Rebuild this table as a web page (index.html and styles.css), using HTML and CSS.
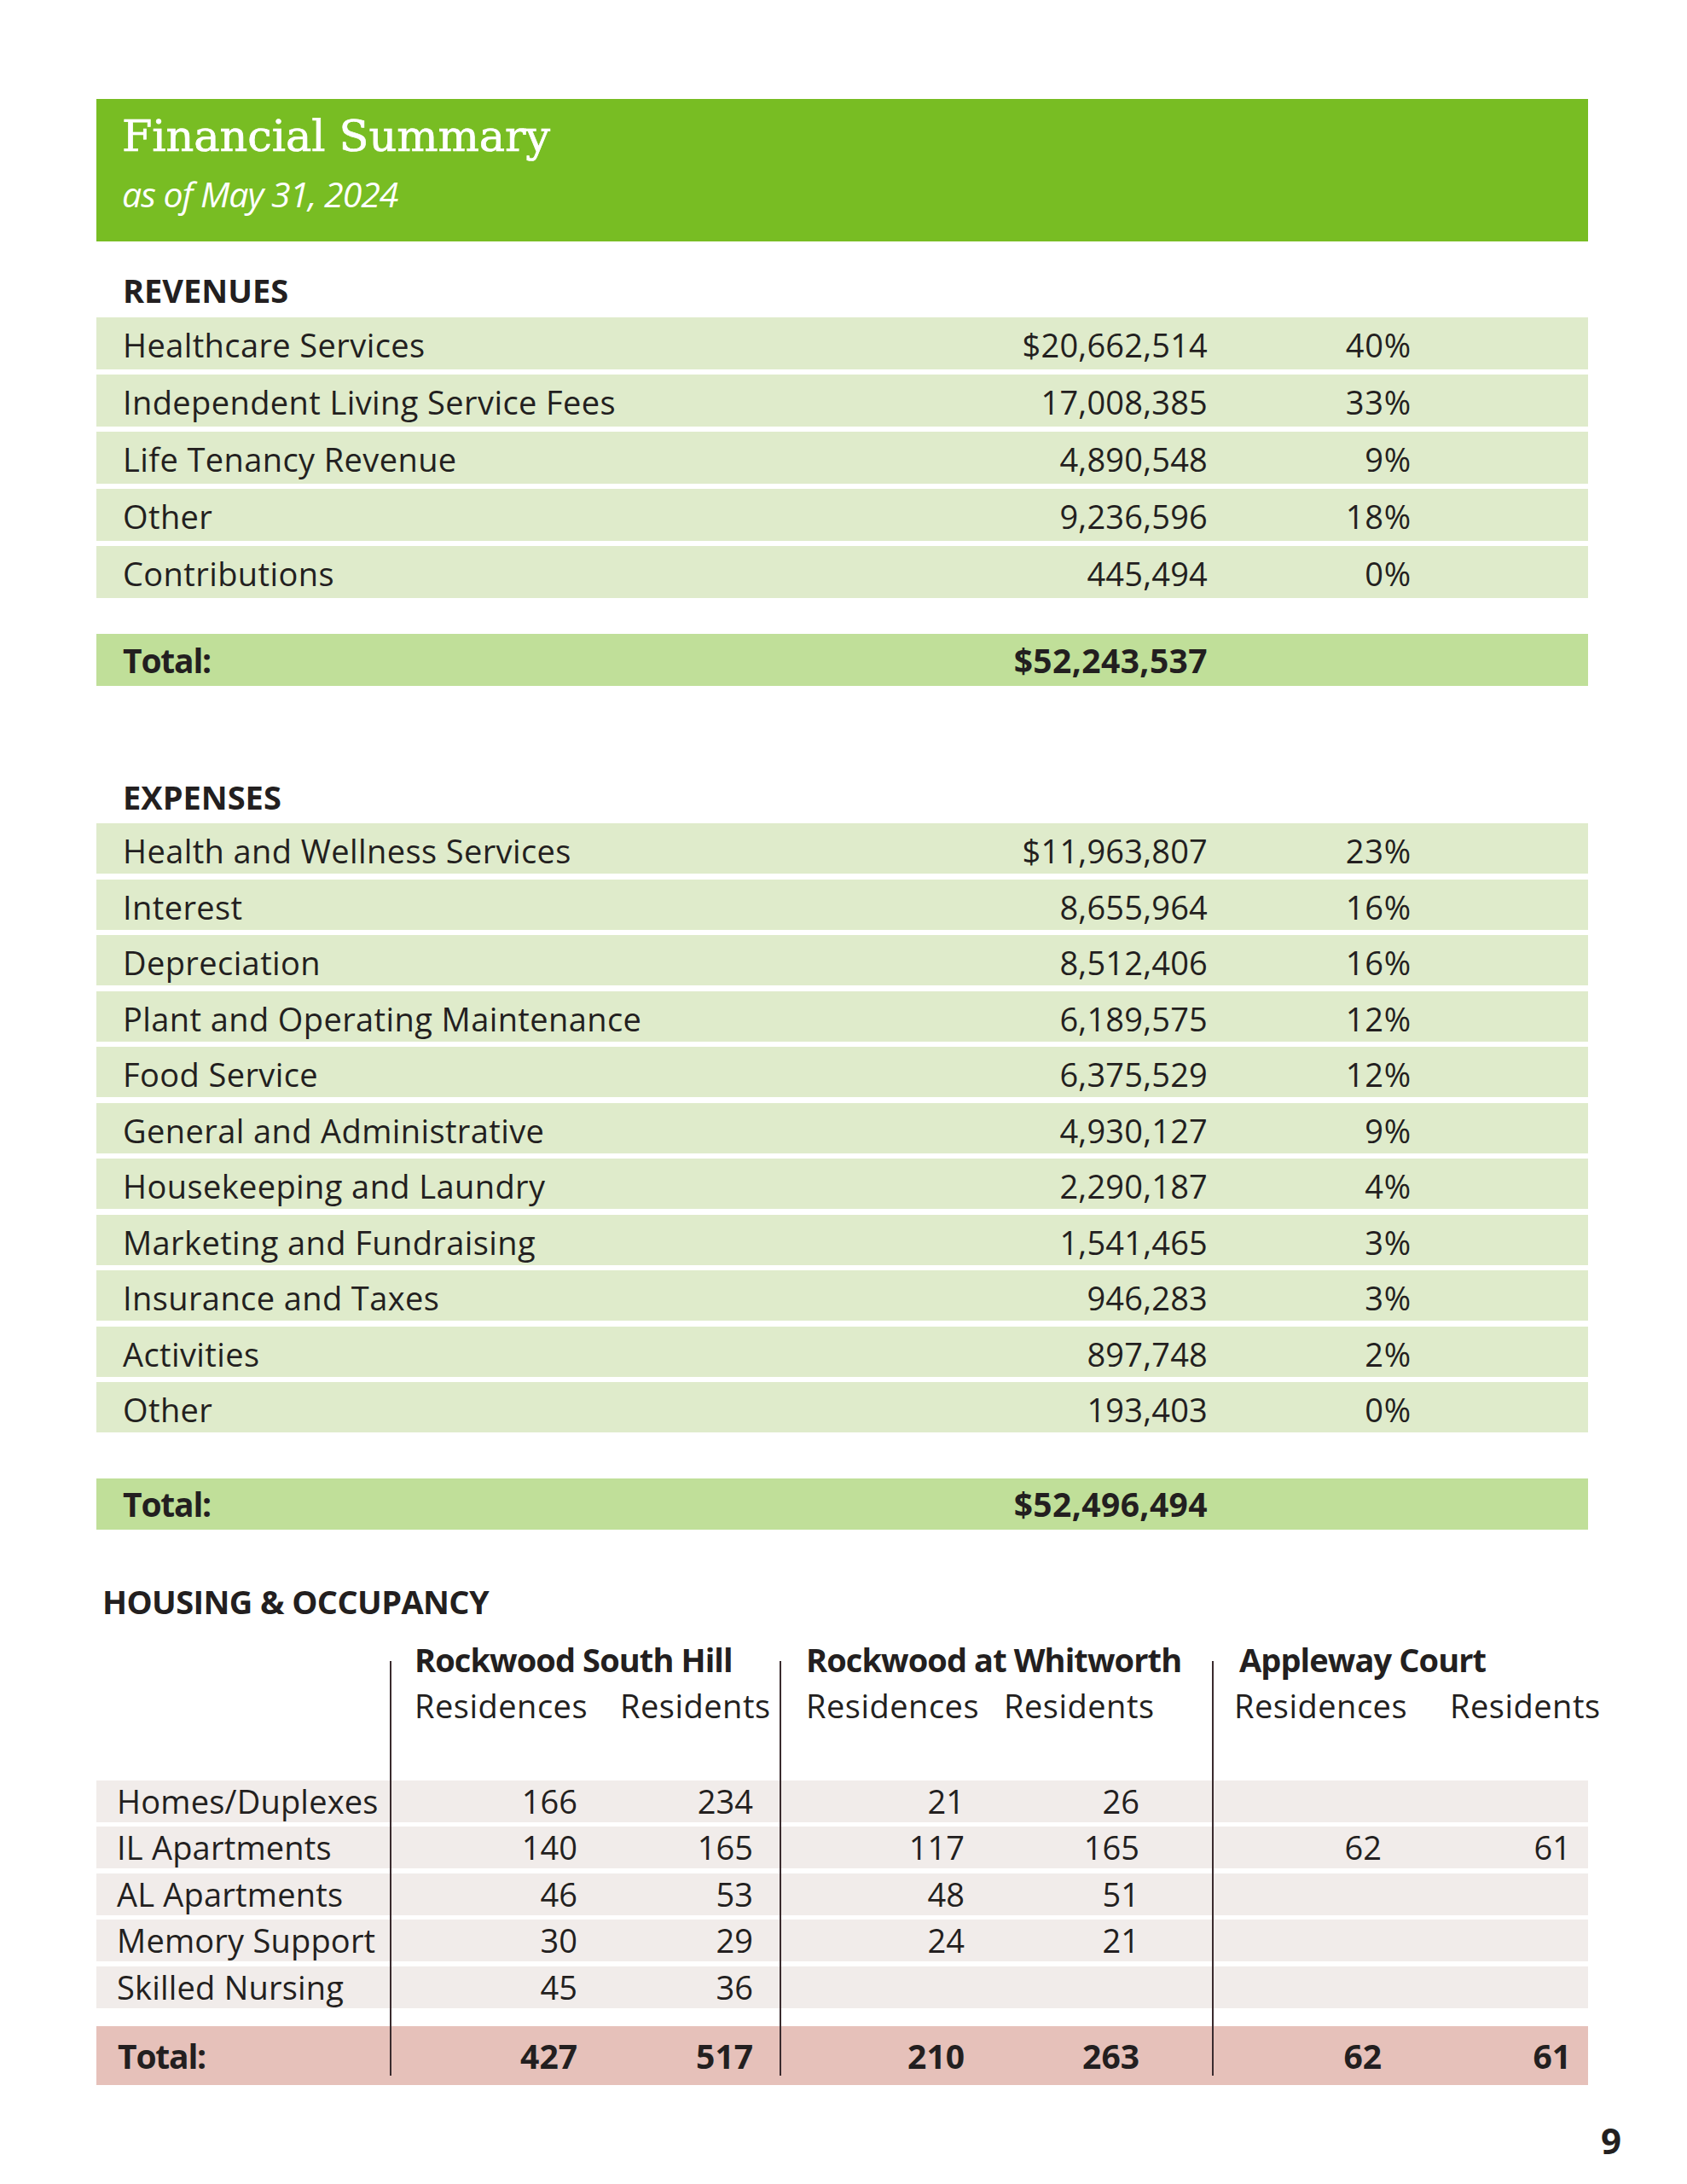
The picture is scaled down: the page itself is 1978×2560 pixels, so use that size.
FILE: index.html
```html
<!DOCTYPE html>
<html lang="en">
<head>
<meta charset="utf-8">
<title>Financial Summary</title>
<link rel="stylesheet" href="styles.css">
</head>
<body>
<main class="page">
  <header class="banner">
    <h1 class="banner-title">Financial Summary</h1>
    <p class="banner-sub">as of May 31, 2024</p>
  </header>

  <section class="fin fin-rev">
    <h2 class="sec-title">REVENUES</h2>
    <div class="rows">
      <div class="row"><span class="lbl">Healthcare Services</span><span class="amt">$20,662,514</span><span class="pct">40%</span></div>
      <div class="row"><span class="lbl">Independent Living Service Fees</span><span class="amt">17,008,385</span><span class="pct">33%</span></div>
      <div class="row"><span class="lbl">Life Tenancy Revenue</span><span class="amt">4,890,548</span><span class="pct">9%</span></div>
      <div class="row"><span class="lbl">Other</span><span class="amt">9,236,596</span><span class="pct">18%</span></div>
      <div class="row"><span class="lbl">Contributions</span><span class="amt">445,494</span><span class="pct">0%</span></div>
    </div>
    <div class="total"><span class="lbl">Total:</span><span class="amt">$52,243,537</span><span class="pct"></span></div>
  </section>

  <section class="fin fin-exp">
    <h2 class="sec-title">EXPENSES</h2>
    <div class="rows">
      <div class="row"><span class="lbl">Health and Wellness Services</span><span class="amt">$11,963,807</span><span class="pct">23%</span></div>
      <div class="row"><span class="lbl">Interest</span><span class="amt">8,655,964</span><span class="pct">16%</span></div>
      <div class="row"><span class="lbl">Depreciation</span><span class="amt">8,512,406</span><span class="pct">16%</span></div>
      <div class="row"><span class="lbl">Plant and Operating Maintenance</span><span class="amt">6,189,575</span><span class="pct">12%</span></div>
      <div class="row"><span class="lbl">Food Service</span><span class="amt">6,375,529</span><span class="pct">12%</span></div>
      <div class="row"><span class="lbl">General and Administrative</span><span class="amt">4,930,127</span><span class="pct">9%</span></div>
      <div class="row"><span class="lbl">Housekeeping and Laundry</span><span class="amt">2,290,187</span><span class="pct">4%</span></div>
      <div class="row"><span class="lbl">Marketing and Fundraising</span><span class="amt">1,541,465</span><span class="pct">3%</span></div>
      <div class="row"><span class="lbl">Insurance and Taxes</span><span class="amt">946,283</span><span class="pct">3%</span></div>
      <div class="row"><span class="lbl">Activities</span><span class="amt">897,748</span><span class="pct">2%</span></div>
      <div class="row"><span class="lbl">Other</span><span class="amt">193,403</span><span class="pct">0%</span></div>
    </div>
    <div class="total"><span class="lbl">Total:</span><span class="amt">$52,496,494</span><span class="pct"></span></div>
  </section>

  <section class="occupancy">
    <h2 class="sec-title occ-title">HOUSING &amp; OCCUPANCY</h2>
    <div class="occ">
      <!-- bands -->
      <div class="band r3"></div>
      <div class="band r4"></div>
      <div class="band r5"></div>
      <div class="band r6"></div>
      <div class="band r7"></div>
      <div class="band band-total r8"></div>

      <!-- group headings -->
      <div class="grp g1 r1">Rockwood South Hill</div>
      <div class="grp g2 r1">Rockwood at Whitworth</div>
      <div class="grp g3 r1">Appleway Court</div>

      <div class="sub c2 r2">Residences</div>
      <div class="sub c3 r2">Residents</div>
      <div class="sub c4 r2">Residences</div>
      <div class="sub c5 r2">Residents</div>
      <div class="sub c6 r2">Residences</div>
      <div class="sub c7 r2">Residents</div>

      <div class="cell name r3">Homes/Duplexes</div>
      <div class="cell val c2 r3">166</div>
      <div class="cell val c3 r3">234</div>
      <div class="cell val c4 r3">21</div>
      <div class="cell val c5 r3">26</div>

      <div class="cell name r4">IL Apartments</div>
      <div class="cell val c2 r4">140</div>
      <div class="cell val c3 r4">165</div>
      <div class="cell val c4 r4">117</div>
      <div class="cell val c5 r4">165</div>
      <div class="cell val c6 r4">62</div>
      <div class="cell val c7 r4">61</div>

      <div class="cell name r5">AL Apartments</div>
      <div class="cell val c2 r5">46</div>
      <div class="cell val c3 r5">53</div>
      <div class="cell val c4 r5">48</div>
      <div class="cell val c5 r5">51</div>

      <div class="cell name r6">Memory Support</div>
      <div class="cell val c2 r6">30</div>
      <div class="cell val c3 r6">29</div>
      <div class="cell val c4 r6">24</div>
      <div class="cell val c5 r6">21</div>

      <div class="cell name r7">Skilled Nursing</div>
      <div class="cell val c2 r7">45</div>
      <div class="cell val c3 r7">36</div>

      <div class="cell name tot r8">Total:</div>
      <div class="cell val tot c2 r8">427</div>
      <div class="cell val tot c3 r8">517</div>
      <div class="cell val tot c4 r8">210</div>
      <div class="cell val tot c5 r8">263</div>
      <div class="cell val tot c6 r8">62</div>
      <div class="cell val tot c7 r8">61</div>

      <!-- divider lines -->
      <div class="vline c2"></div>
      <div class="vline c4"></div>
      <div class="vline c6"></div>
    </div>
  </section>

  <footer class="folio">9</footer>
</main>
</body>
</html>
```

FILE: styles.css
```css
* { box-sizing: border-box; }

html, body {
  margin: 0;
  padding: 0;
  background: #ffffff;
}

body {
  font-family: "Open Sans", "Noto Sans", sans-serif;
  font-weight: 500;
  color: #231f20;
  width: 1978px;
}

.page {
  padding: 116px 0 0 113px;
  width: 1862px;
}

/* ---------- banner ---------- */
.banner {
  height: 167px;
  background: #78bd23;
  padding: 18px 30px 0;
  color: #ffffff;
}

.banner-title {
  margin: 0;
  font-family: "DejaVu Serif", "Liberation Serif", serif;
  font-weight: normal;
  font-size: 51px;
  line-height: 1;
  letter-spacing: -0.1px;
  -webkit-text-stroke: 0.7px #ffffff;
}

.banner-sub {
  margin: 22px 0 0;
  font-family: "Open Sans", sans-serif;
  font-style: italic;
  font-weight: 400;
  font-size: 41px;
  line-height: 1;
  letter-spacing: -1px;
}

/* ---------- section titles ---------- */
.sec-title {
  margin: 0;
  padding-left: 31px;
  font-size: 38px;
  font-weight: 700;
  line-height: 1;
  letter-spacing: 0;
}

.fin-rev .sec-title { margin-top: 38px; }
.fin-exp .sec-title { margin-top: 111px; }

/* ---------- finance rows ---------- */
.rows {
  display: flex;
  flex-direction: column;
}

.fin-rev .rows { margin-top: 13px; gap: 6px; }
.fin-exp .rows { margin-top: 12px; gap: 6.5px; }

.row,
.total {
  display: grid;
  grid-template-columns: 1fr 400px 239px;
  padding: 0 207px 0 31px;
  font-size: 38px;
  white-space: nowrap;
}

.row { background: #dfebcb; }

.fin-rev .row {
  height: 61px;
  padding-top: 4px;
  line-height: 57px;
}

.fin-exp .row {
  height: 59px;
  padding-top: 5px;
  line-height: 54px;
}

.lbl { letter-spacing: 0.4px; }

.amt {
  text-align: right;
  letter-spacing: 0.2px;
}

.pct {
  text-align: right;
  letter-spacing: 0.8px;
}

.total {
  background: #c0df99;
  font-weight: 700;
  font-size: 39px;
  line-height: 61px;
}

.total .lbl { letter-spacing: -1.2px; }
.total .amt { letter-spacing: 0.4px; }

.fin-rev .total { margin-top: 42px; height: 61px; }
.fin-exp .total { margin-top: 54px; height: 60px; line-height: 60px; }

/* ---------- occupancy ---------- */
.occ-title {
  margin-top: 65px;
  padding-left: 7px;
  letter-spacing: -0.6px;
}

.occ {
  margin-top: 30px;
  width: 1749px;
  display: grid;
  grid-template-columns: 345px 242px 215px 245px 262px 240px 200px;
  grid-template-rows: 48.5px 101px 49px 49px 49px 49px 49px 84.5px;
  row-gap: 5.5px;
  font-size: 38px;
  white-space: nowrap;
}

.r1 { grid-row: 1; }
.r2 { grid-row: 2; }
.r3 { grid-row: 3; }
.r4 { grid-row: 4; }
.r5 { grid-row: 5; }
.r6 { grid-row: 6; }
.r7 { grid-row: 7; }
.r8 { grid-row: 8; }

.c2 { grid-column: 2; }
.c3 { grid-column: 3; }
.c4 { grid-column: 4; }
.c5 { grid-column: 5; }
.c6 { grid-column: 6; }
.c7 { grid-column: 7; }

.band {
  grid-column: 1 / -1;
  background: #f1ecea;
}

.band-total {
  background: #e6c1ba;
  height: 69px;
  align-self: end;
}

.grp {
  font-weight: 700;
  font-size: 38px;
  line-height: 1;
  letter-spacing: -0.9px;
  align-self: start;
}

.g1 { grid-column: 2 / 4; padding-left: 28px; }
.g2 { grid-column: 4 / 6; padding-left: 30px; }
.g3 { grid-column: 6 / 8; padding-left: 31px; }

.sub {
  line-height: 1;
  align-self: start;
  letter-spacing: 0.5px;
}

.sub.c2 { padding-left: 28px; }
.sub.c3 { padding-left: 27px; }
.sub.c4 { padding-left: 30px; }
.sub.c5 { padding-left: 17px; }
.sub.c6 { padding-left: 25px; }
.sub.c7 { padding-left: 38px; overflow: visible; }

.cell {
  line-height: 49px;
}

.name {
  grid-column: 1;
  padding-left: 24px;
  letter-spacing: 0.2px;
}

.val {
  text-align: right;
  letter-spacing: 0;
}

.val.c2 { padding-right: 23px; }
.val.c3 { padding-right: 32px; }
.val.c4 { padding-right: 29px; }
.val.c5 { padding-right: 86px; }
.val.c6 { padding-right: 42px; }
.val.c7 { padding-right: 20px; }

.tot {
  font-weight: 700;
  font-size: 39px;
  line-height: 69px;
  height: 69px;
  align-self: end;
}

.name.tot { padding-left: 25px; letter-spacing: -1.2px; }

.vline {
  grid-row: 1 / -1;
  justify-self: start;
  width: 2px;
  margin: 21px 0 11px -1px;
  background: #3a2b2e;
  z-index: 1;
}

/* ---------- folio ---------- */
.folio {
  margin-top: 44px;
  width: 1788px;
  text-align: right;
  font-weight: 700;
  font-size: 42px;
  line-height: 1;
  padding-bottom: 30px;
}
```
